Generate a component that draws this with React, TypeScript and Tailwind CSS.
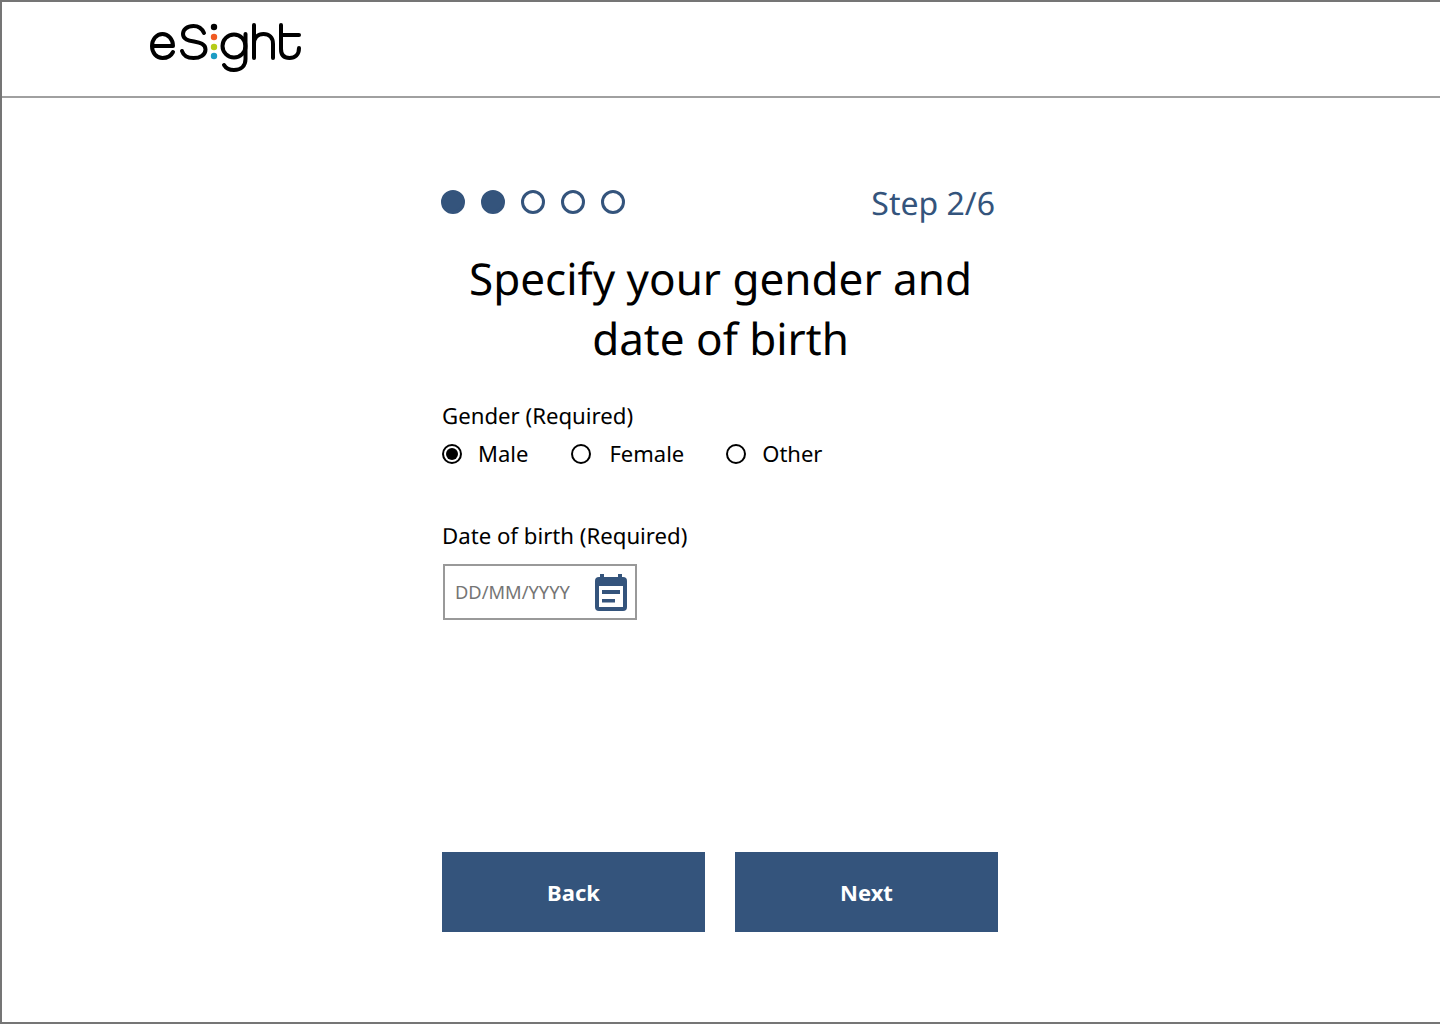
import { useState } from 'react'

const font = "font-['Noto_Sans','Open_Sans',sans-serif] [text-rendering:geometricPrecision]"

function Logo() {
  return (
    <svg width="154" height="50" viewBox="0 0 154 50" fill="none" aria-label="eSight">
      <g stroke="#000" strokeWidth="4" strokeLinecap="round" strokeLinejoin="round">
        <path d="M4 23 H25 C25 16 20 11 14.5 11 C8.5 11 4 16.5 4 23 C4 30 8.5 35 14.5 35 C19 35 23 33 25 29" />
        <path d="M56 10 C54 5.5 50 3 45.5 3 C39 3 35 6.5 35 11 C35 22 57.5 15 57.5 26.5 C57.5 32 52 35 45.5 35 C40 35 35.5 33 34 28" />
        <circle cx="86" cy="23" r="11.5" />
        <path d="M97.5 11 V36 C97.5 43 93 47 86 47 C81.5 47 78 45.5 76 42" />
        <path d="M106 2 V35" />
        <path d="M106 21 C106 14 110 11 115.5 11 C121 11 125 14 125 21 V35" />
        <path d="M133 2 V26 C133 32 136 35 141.5 35 C147 35 151 32 151 25" />
        <path d="M133 12 H151" />
      </g>
      <circle cx="66" cy="4" r="3.2" fill="#000" />
      <circle cx="66" cy="14" r="3.2" fill="#f05a22" />
      <circle cx="66" cy="24" r="3.2" fill="#b5cc18" />
      <circle cx="66" cy="33" r="3.2" fill="#1b9cc4" />
    </svg>
  )
}

function Calendar() {
  return (
    <svg width="32" height="37" viewBox="0 0 32 37" fill="none">
      <rect x="5" y="0" width="4" height="6" fill="#34547c" />
      <rect x="23" y="0" width="4" height="6" fill="#34547c" />
      <rect x="0" y="3" width="32" height="34" rx="4" fill="#34547c" />
      <rect x="4" y="12" width="24" height="21" fill="#fff" />
      <rect x="7" y="16" width="18" height="4" fill="#34547c" />
      <rect x="7" y="25" width="13" height="3.5" fill="#34547c" />
    </svg>
  )
}

function Radio({ label, checked, className, onClick }: { label: string; checked: boolean; className: string; onClick: () => void }) {
  return (
    <button type="button" onClick={onClick} className={`flex items-center text-[22px] leading-[30px] text-black ${className}`}>
      <span className="mt-[2px] flex h-[20px] w-[20px] items-center justify-center rounded-full border-2 border-black">
        {checked && <span className="h-[12px] w-[12px] rounded-full bg-black" />}
      </span>
      {label}
    </button>
  )
}

export default function App() {
  const [gender, setGender] = useState('Male')
  const steps = [true, true, false, false, false]

  return (
    <div className={`${font} flex h-[1024px] w-[1440px] flex-col border-2 border-r-0 border-[#757575] bg-white`}>
      <header className="flex h-[96px] shrink-0 items-start border-b-2 border-[#a0a0a0] pl-[146px] pt-[21px]">
        <Logo />
      </header>

      <main className="ml-[440px] flex w-[556px] flex-1 flex-col pt-[82px]">
        <div className="flex items-start justify-between">
          <div className="-ml-px mt-[10px] flex gap-[16px]">
            {steps.map((done, i) => (
              <span key={i} className={`h-[24px] w-[24px] rounded-full border-[3px] border-[#34547c] ${done ? 'bg-[#34547c]' : 'bg-white'}`} />
            ))}
          </div>
          <span className="mt-[2px] pr-[3px] text-[32px] leading-[44px] text-[#34547c]">Step 2/6</span>
        </div>

        <h1 className="ml-px mt-[22px] text-center text-[44px] font-normal leading-[60px] text-black">
          Specify your gender and
          <br />
          date of birth
        </h1>

        <p className="mt-[33px] text-[22.2px] leading-[30px] text-black">Gender (Required)</p>
        <div className="mt-[7px] flex">
          <Radio label="Male" checked={gender === 'Male'} className="gap-[16px]" onClick={() => setGender('Male')} />
          <Radio label="Female" checked={gender === 'Female'} className="ml-[43px] gap-[18px]" onClick={() => setGender('Female')} />
          <Radio label="Other" checked={gender === 'Other'} className="ml-[42px] gap-[16px]" onClick={() => setGender('Other')} />
        </div>

        <p className="mt-[53px] text-[22.2px] leading-[30px] text-black">Date of birth (Required)</p>
        <div className="ml-px mt-[13px] flex h-[56px] w-[194px] items-center justify-between border-2 border-[#999] pl-[10px] pr-[8px]">
          <span className="pt-[2px] text-[18.3px] text-[#757575]">DD/MM/YYYY</span>
          <Calendar />
        </div>

        <div className="mt-[232px] flex gap-[30px]">
          <button type="button" className="h-[80px] flex-1 bg-[#34547c] text-[22px] font-bold text-white">Back</button>
          <button type="button" className="h-[80px] flex-1 bg-[#34547c] text-[22px] font-bold text-white">Next</button>
        </div>
      </main>
    </div>
  )
}
